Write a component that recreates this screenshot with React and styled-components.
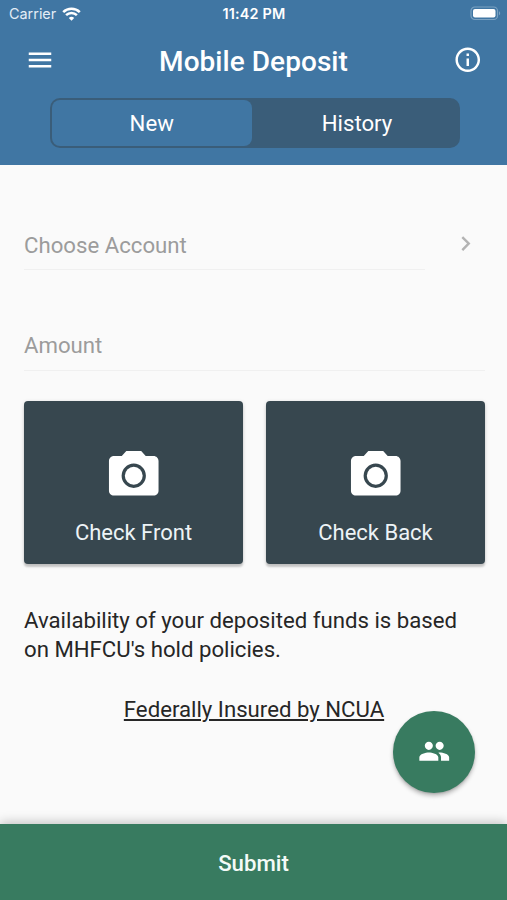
import styled, { createGlobalStyle } from 'styled-components';

const colors = {
    primary: '#4076a3',
    primaryDark: '#3a5d79',
    secondary: '#387b60',
    card: '#37474f',
    background: '#fafafa',
    text: '#262626',
    placeholder: '#9c9c9c',
    line: '#f0f0f0',
};

const GlobalStyle = createGlobalStyle`
    * {
        box-sizing: border-box;
    }

    body {
        margin: 0;
        background: ${colors.background};
    }

    button {
        border: none;
        padding: 0;
        background: none;
        color: inherit;
        font: inherit;
        letter-spacing: inherit;
    }
`;

const Screen = styled.div`
    position: relative;
    display: flex;
    flex-direction: column;
    height: 900px;
    overflow: hidden;
    background: ${colors.background};
    color: ${colors.text};
    font-family: Roboto, sans-serif;
    font-size: 22.2px;
    letter-spacing: 0;
`;

const Header = styled.header`
    display: flex;
    flex-direction: column;
    height: 164.5px;
    background: ${colors.primary};
    color: #fff;
`;

const StatusBar = styled.div`
    display: grid;
    grid-template-columns: 1fr auto 1fr;
    align-items: center;
    height: 27px;
    padding: 0 6px 0 9px;
    font-family: Inter, sans-serif;
    font-size: 14.4px;
    letter-spacing: 0;
`;

const Carrier = styled.div`
    display: flex;
    align-items: center;
    gap: 5.5px;
    color: #e3edf6;
`;

const Clock = styled.div`
    margin-right: 2px;
    font-weight: 600;
    font-size: 14.4px;
    letter-spacing: 0.2px;
`;

const BatteryIcon = styled.svg`
    justify-self: end;
`;

const Toolbar = styled.div`
    display: flex;
    align-items: center;
    justify-content: space-between;
    height: 66px;
    padding: 0 24.5px 0 25px;
`;

const Title = styled.h1`
    margin: 2px 1px 0 0;
    font-size: 28px;
    font-weight: 500;
    letter-spacing: 0.05px;
`;

const IconButton = styled.button`
    display: flex;
`;

const Segment = styled.div`
    display: grid;
    grid-template-columns: 199.5px 1fr;
    width: 409.5px;
    height: 50px;
    margin: 4.5px 0 0 50px;
    padding: 2px;
    border-radius: 10px;
    background: ${colors.primaryDark};
`;

const SegmentButton = styled.button`
    padding-left: ${({ $active }) => ($active ? '0' : '5px')};
    border-radius: 8px;
    background: ${({ $active }) => ($active ? colors.primary : 'transparent')};
`;

const Content = styled.main`
    flex: 1;
    display: flex;
    flex-direction: column;
    padding: 55.5px 22px 0 24px;
`;

const AccountRow = styled.div`
    display: flex;
    justify-content: space-between;
    padding-right: 5px;
`;

const Field = styled.div`
    width: ${({ $width }) => $width};
    height: ${({ $height }) => $height || '50px'};
    padding-top: 13px;
    border-bottom: 1px solid ${colors.line};
    color: ${colors.placeholder};
    line-height: 25px;
`;

const ChevronIcon = styled.svg`
    margin-top: 9px;
`;

const AmountRow = styled.div`
    margin-top: 50px;
`;

const Cards = styled.div`
    display: grid;
    grid-template-columns: 1fr 1fr;
    gap: 23px;
    margin-top: 29.5px;
`;

const Card = styled.button`
    display: flex;
    flex-direction: column;
    align-items: center;
    height: 163.7px;
    padding-top: 45px;
    border-radius: 4px;
    background: ${colors.card};
    color: #fff;
    box-shadow: 0 3px 2px rgba(0, 0, 0, 0.16), 0 1px 4px rgba(0, 0, 0, 0.14);
`;

const CardLabel = styled.span`
    margin-top: 15px;
    color: #edf3f6;
    font-size: 22px;
    line-height: 26px;
`;

const Notice = styled.p`
    margin: 42px 0 0;
    line-height: 29px;
`;

const InsuredLink = styled.a`
    align-self: center;
    margin: 30.6px 1px 0 0;
    line-height: 28px;
    text-decoration: underline;
    text-decoration-thickness: 1.5px;
    text-underline-offset: 2px;
`;

const Fab = styled.button`
    position: absolute;
    top: 710.5px;
    left: 393px;
    display: flex;
    align-items: center;
    justify-content: center;
    width: 82px;
    height: 82px;
    border-radius: 50%;
    background: ${colors.secondary};
    color: #fff;
    box-shadow: 0 3px 4px rgba(0, 0, 0, 0.25), 0 1px 2px rgba(0, 0, 0, 0.12);
`;

const SubmitBar = styled.footer`
    display: flex;
    align-items: center;
    justify-content: center;
    height: 76px;
    padding-top: 1px;
    background: ${colors.secondary};
    color: #f4faf7;
    font-weight: 500;
    box-shadow: 0 -2px 10px rgba(0, 0, 0, 0.22);
`;

function CheckCard({ label }) {
    return (
        <Card>
            <svg width="59.5" height="59.5" viewBox="0 0 24 24" fill="currentColor">
                <circle cx="12" cy="12" r="3.6" />
                <path d="M9 2 7.17 4H4c-1.1 0-2 .9-2 2v12c0 1.1.9 2 2 2h16c1.1 0 2-.9 2-2V6c0-1.1-.9-2-2-2h-3.17L15 2H9zm3 14.9a4.9 4.9 0 1 1 0-9.8 4.9 4.9 0 0 1 0 9.8z" />
            </svg>
            <CardLabel>{label}</CardLabel>
        </Card>
    );
}

export default function App() {
    return (
        <>
            <GlobalStyle />
            <Screen>
                <Header>
                    <StatusBar>
                        <Carrier>
                            Carrier
                            <svg width="19" height="14" viewBox="0 0 19 14" fill="none" stroke="#fff" strokeWidth="2.5">
                                <path d="M1.2 5.1a11.8 11.8 0 0 1 16.6 0" />
                                <path d="M4.1 8.2a7.6 7.6 0 0 1 10.8 0" />
                                <path d="M9.5 13.8 6.8 11a3.9 3.9 0 0 1 5.4 0z" fill="#fff" stroke="none" />
                            </svg>
                        </Carrier>
                        <Clock>11:42 PM</Clock>
                        <BatteryIcon width="31" height="15" viewBox="0 0 31 15">
                            <rect x="1" y="1" width="26.5" height="12.5" rx="3.8" fill="none" stroke="#7ba2c2" strokeWidth="1.2" />
                            <rect x="3" y="3" width="22.5" height="8.5" rx="2" fill="#fff" />
                            <path d="M29 5.2c1.6.6 1.6 3.5 0 4.1z" fill="#7ba2c2" />
                        </BatteryIcon>
                    </StatusBar>
                    <Toolbar>
                        <IconButton aria-label="Menu">
                            <svg width="30" height="30" viewBox="0 0 512 512" fill="currentColor">
                                <path d="M64 384h384v-42.67H64V384zm0-106.67h384v-42.66H64v42.66zM64 128v42.67h384V128H64z" />
                            </svg>
                        </IconButton>
                        <Title>Mobile Deposit</Title>
                        <IconButton aria-label="Information">
                            <svg width="29.5" height="29.5" viewBox="0 0 24 24" fill="currentColor">
                                <path d="M11 7h2v2h-2zm0 4h2v6h-2zm1-9C6.48 2 2 6.48 2 12s4.48 10 10 10 10-4.48 10-10S17.52 2 12 2zm0 18c-4.41 0-8-3.59-8-8s3.59-8 8-8 8 3.59 8 8-3.59 8-8 8z" />
                            </svg>
                        </IconButton>
                    </Toolbar>
                    <Segment>
                        <SegmentButton $active>New</SegmentButton>
                        <SegmentButton>History</SegmentButton>
                    </Segment>
                </Header>

                <Content>
                    <AccountRow>
                        <Field $width="401px">Choose Account</Field>
                        <ChevronIcon width="29.2" height="29.2" viewBox="0 0 24 24" fill="#b3b3b3">
                            <path d="M8.59 16.59 13.17 12 8.59 7.41 10 6l6 6-6 6z" />
                        </ChevronIcon>
                    </AccountRow>
                    <AmountRow>
                        <Field $width="100%" $height="51px">Amount</Field>
                    </AmountRow>
                    <Cards>
                        <CheckCard label="Check Front" />
                        <CheckCard label="Check Back" />
                    </Cards>
                    <Notice>Availability of your deposited funds is based on MHFCU's hold policies.</Notice>
                    <InsuredLink>Federally Insured by NCUA</InsuredLink>
                </Content>

                <SubmitBar as="button">Submit</SubmitBar>

                <Fab aria-label="Contacts">
                    <svg width="32.5" height="32.5" viewBox="0 0 24 24" fill="currentColor">
                        <path d="M16 11c1.66 0 2.99-1.34 2.99-3S17.66 5 16 5s-3 1.34-3 3 1.34 3 3 3zm-8 0c1.66 0 2.99-1.34 2.99-3S9.66 5 8 5 5 6.34 5 8s1.34 3 3 3zm0 2c-2.33 0-7 1.17-7 3.5V19h14v-2.5c0-2.33-4.67-3.5-7-3.5zm8 0c-.29 0-.62.02-.97.05 1.16.84 1.97 1.97 1.97 3.45V19h6v-2.5c0-2.33-4.67-3.5-7-3.5z" />
                    </svg>
                </Fab>
            </Screen>
        </>
    );
}
